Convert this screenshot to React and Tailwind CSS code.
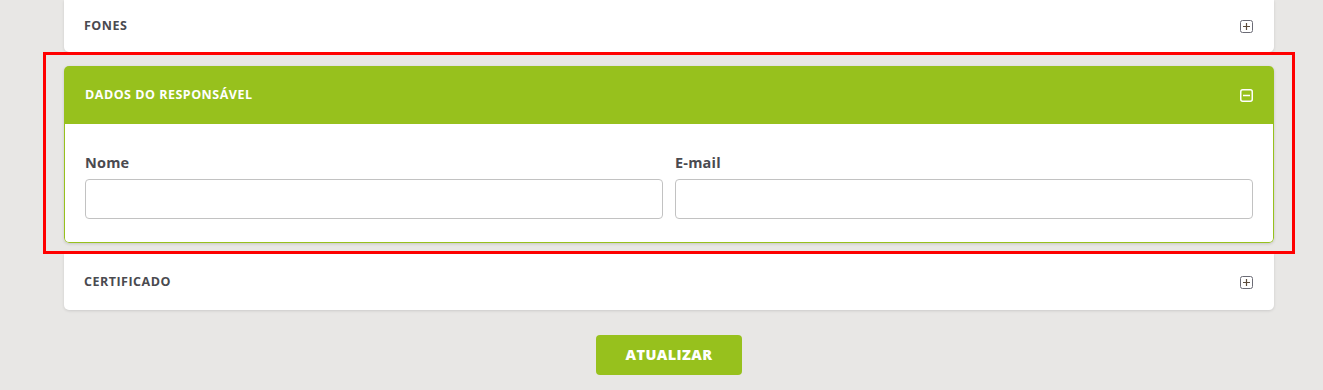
import React from "react";

const PlusBox = () => (
  <svg width="13" height="13" viewBox="0 0 13 13" fill="none">
    <rect x="0.5" y="0.5" width="12" height="12" rx="2" stroke="#6b6b75" strokeWidth="1" />
    <path d="M6.5 3v7M3 6.5h7" stroke="#5a4a3a" strokeWidth="1.2" />
  </svg>
);

const MinusBox = () => (
  <svg width="13" height="13" viewBox="0 0 13 13" fill="none">
    <rect x="0.75" y="0.75" width="11.5" height="11.5" rx="2" stroke="#ffffff" strokeWidth="1.5" />
    <path d="M3 6.5h7" stroke="#ffffff" strokeWidth="1.5" />
  </svg>
);

const CollapsedCard = ({ title, className = "" }) => (
  <div className={`bg-white shadow-[0_1px_3px_rgba(0,0,0,0.12)] flex items-center justify-between pl-[20px] pr-[21px] ${className}`}>
    <span className="text-[12.5px] font-bold text-[#4a4a4f] tracking-[0.5px] uppercase">{title}</span>
    <PlusBox />
  </div>
);

const Field = ({ label, value }) => (
  <div className="flex-1 flex flex-col">
    <label className="text-[14.5px] font-bold text-[#4a4a4f] mb-[6px] leading-[20px] tracking-[0.2px]">{label}</label>
    <input
      readOnly
      value={value}
      className="h-[40px] w-full border border-[#c2c2c2] rounded-[4px] px-3 text-[13px] text-[#555] outline-none bg-white"
    />
  </div>
);

export default function App() {
  return (
    <div className="min-h-[390px] bg-[#e8e7e5] font-['Open_Sans',sans-serif] overflow-hidden">
      <div className="ml-[64px] w-[1210px] flex flex-col">
        {/* Fones */}
        <CollapsedCard title="Fones" className="h-[52px] rounded-b-[5px]" />

        {/* Highlighted section */}
        <div className="mx-[-21px] border-[3px] border-[#ff0000] px-[18px] pt-[11px] pb-[8px]">
          <div className="rounded-[5px] shadow-[0_1px_3px_rgba(0,0,0,0.15)] overflow-hidden">
            <div className="h-[58px] bg-[#97c11d] flex items-center justify-between pl-[21px] pr-[21px]">
              <span className="text-[12.5px] font-bold text-white tracking-[0.5px]">DADOS DO RESPONSÁVEL</span>
              <MinusBox />
            </div>
            <div className="bg-white border border-t-0 border-[#97c11d] rounded-b-[5px] px-[20px] pt-[29px] pb-[23px] flex gap-[12px]">
              <Field label="Nome" value="" />
              <Field label="E-mail" value="" />
            </div>
          </div>
        </div>

        {/* Certificado */}
        <CollapsedCard title="Certificado" className="h-[56px] rounded-b-[5px]" />

        <div className="flex justify-center mt-[25px]">
          <button className="w-[146px] h-[40px] bg-[#97c11d] rounded-[4px] text-white text-[14.5px] font-extrabold tracking-[0.4px]">
            ATUALIZAR
          </button>
        </div>
      </div>
    </div>
  );
}
